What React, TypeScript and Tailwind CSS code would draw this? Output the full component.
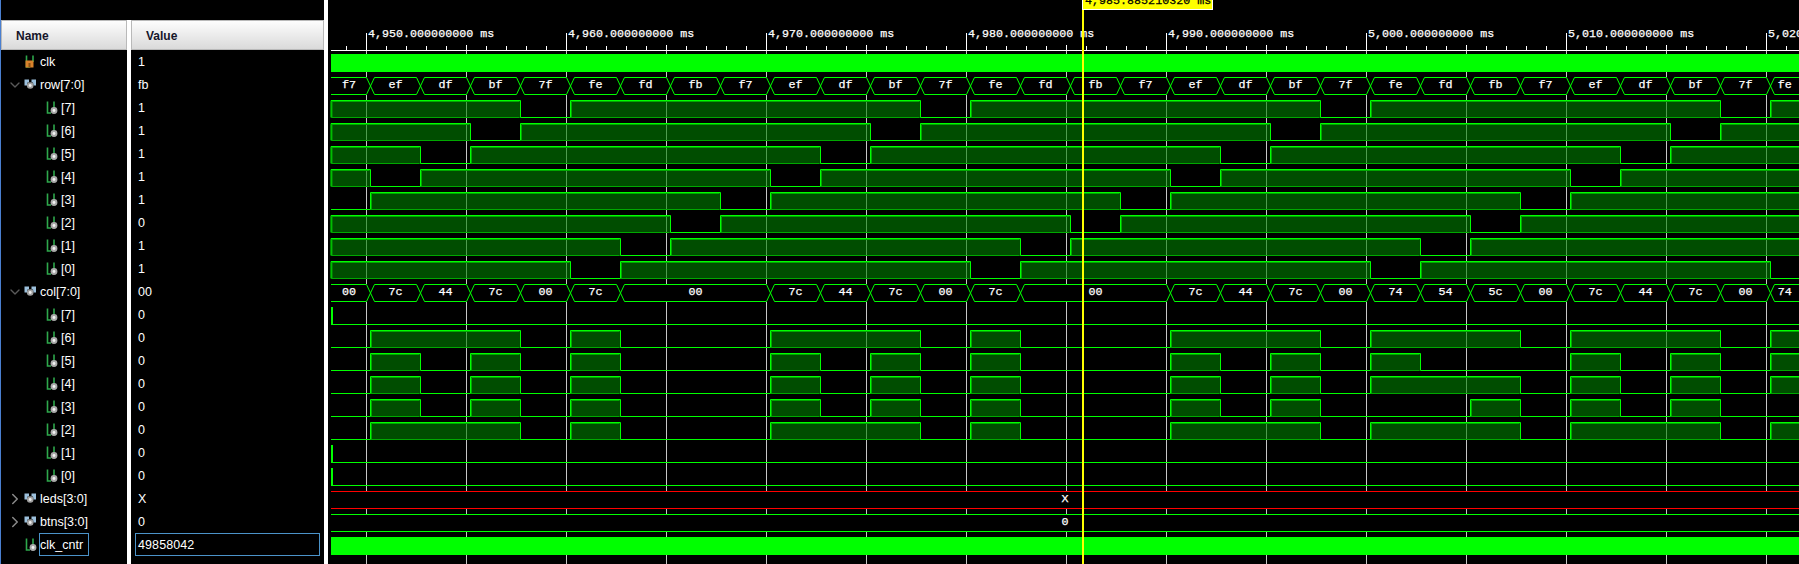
import { ChevronDown, ChevronRight } from "lucide-react";

const GREEN = "#00ff00";

// one entry per 50px slice of the bus, first one is the part before x=370
const rowVals: string[] = [];
const rowCycle = ["f7", "ef", "df", "bf", "7f", "fe", "fd", "fb"];
for (let k = 0; k < 30; k++) rowVals.push(rowCycle[k % 8]);

const colVals = [
  "00", "7c", "44", "7c", "00", "7c", "00", "00", "00", "7c",
  "44", "7c", "00", "7c", "00", "00", "00", "7c", "44", "7c",
  "00", "74", "54", "5c", "00", "7c", "44", "7c", "00", "74",
];

const rowBits = [7, 6, 5, 4, 3, 2, 1, 0];

type Sig = {
  name: string;
  value: string;
  kind: "clk" | "bus" | "bit" | "top";
  open?: boolean;
  closed?: boolean;
  selected?: boolean;
};

const signals: Sig[] = [
  { name: "clk", value: "1", kind: "clk" },
  { name: "row[7:0]", value: "fb", kind: "bus", open: true },
  ...rowBits.map((b) => ({
    name: `[${b}]`,
    value: b === 2 ? "0" : "1",
    kind: "bit" as const,
  })),
  { name: "col[7:0]", value: "00", kind: "bus", open: true },
  ...rowBits.map((b) => ({ name: `[${b}]`, value: "0", kind: "bit" as const })),
  { name: "leds[3:0]", value: "X", kind: "bus", closed: true },
  { name: "btns[3:0]", value: "0", kind: "bus", closed: true },
  { name: "clk_cntr", value: "49858042", kind: "top", selected: true },
];

const edge = (k: number) => (k === 0 ? 331 : 370.5 + 50 * (k - 1));
const topOf = (i: number) => 54 + 23 * i;

const monoText = "font-['Liberation_Mono',monospace] text-[11.7px] stroke-[0.25px]";

function BitIcon({ orange }: { orange?: boolean }) {
  return (
    <svg width="14" height="14" viewBox="0 0 14 14" className="shrink-0">
      <path d="M2.5 0.5V12H6" stroke="#2ea84c" strokeWidth="1.6" fill="none" />
      <path d="M9 0.5V7" stroke="#2ea84c" strokeWidth="1.6" fill="none" />
      {orange ? (
        <>
          <rect x="1.5" y="5.5" width="8" height="7" fill="#d9822b" />
          <rect x="4.5" y="8" width="2" height="4.5" fill="#8a5414" />
        </>
      ) : (
        <>
          <circle cx="9" cy="9.5" r="3.4" fill="#a9a9a9" />
          <circle cx="9" cy="9.5" r="1.4" fill="#f2f2f2" />
        </>
      )}
    </svg>
  );
}

function BusIcon() {
  return (
    <svg width="14" height="14" viewBox="0 0 14 14" className="shrink-0">
      <path d="M0.5 1.5H5V4.5H3.5L3 7.5H0.5Z" fill="#9cc0dc" />
      <path d="M7.5 1.5H12V7.5H9.5L9 4.5H7.5Z" fill="#9cc0dc" />
      <circle cx="6.2" cy="7.5" r="3.3" fill="#a0a0a0" />
      <circle cx="6.2" cy="7.5" r="1.4" fill="#efefef" />
    </svg>
  );
}

function NameCell({ sig }: { sig: Sig }) {
  if (sig.kind === "bit") {
    return (
      <div className="h-[23px] flex items-center pl-[44px]">
        <BitIcon />
        <span className="ml-[2px] pt-[2px]">{sig.name}</span>
      </div>
    );
  }
  return (
    <div className="h-[23px] flex items-center pl-[8px]">
      <span className="w-[15px] shrink-0 flex items-center">
        {sig.open && <ChevronDown size={16} color="#5a5a5a" className="-ml-[2px] shrink-0" />}
        {sig.closed && <ChevronRight size={18} color="#8a8a8a" className="-ml-[3px] shrink-0" />}
      </span>
      {sig.kind === "bus" ? <BusIcon /> : <BitIcon orange={sig.kind === "clk"} />}
      {sig.selected ? (
        <span className="ml-[1px] w-[50px] h-[23px] border border-[#4b93c9] flex items-center pt-[2px]">
          {sig.name}
        </span>
      ) : (
        <span className="ml-[2px] pt-[2px]">{sig.name}</span>
      )}
    </div>
  );
}

function ValueCell({ sig }: { sig: Sig }) {
  if (sig.selected) {
    return (
      <div className="h-[23px] pl-[4px] pr-[4px]">
        <div className="h-full border border-[#4b93c9] flex items-center pl-[2px] pt-[2px] tracking-[0.1px]">{sig.value}</div>
      </div>
    );
  }
  return <div className="h-[23px] flex items-center pl-[7px] pt-[2px]">{sig.value}</div>;
}

function Header({ label, pad }: { label: string; pad: string }) {
  return (
    <div
      className={`h-[30px] flex items-center pt-[2px] ${pad} bg-gradient-to-b from-[#fdfdfd] to-[#dadada] border border-[#b9b9b9] text-[12px] font-bold text-[#15152a]`}
    >
      {label}
    </div>
  );
}

function BitWave({ i, vals, bit, stub }: { i: number; vals: string[]; bit: number; stub?: boolean }) {
  const y0 = topOf(i);
  const hi = (k: number) => (parseInt(vals[k], 16) >> bit) & 1;
  const parts = [];
  let k = 0;
  while (k < vals.length) {
    let e = k;
    while (e + 1 < vals.length && hi(e + 1) === hi(k)) e++;
    const a = edge(k);
    const b = Math.min(edge(e + 1), 1800);
    if (hi(k)) {
      parts.push(
        <g key={k}>
          <rect x={a} y={y0} width={b - a} height={18} fill="#008000" opacity={0.6} />
          <path d={`M${a + 1} ${y0 + 17.5}H${b - 1}M${a + 1} ${y0 + 1.5}H${b - 1}M${a + 1} ${y0 + 1.5}V${y0 + 18}`} stroke="#00a800" fill="none" />
          <path d={`M${a} ${y0 + 17.5}V${y0 + 0.5}H${b}V${y0 + 17.5}`} stroke={GREEN} fill="none" />
        </g>
      );
    } else {
      parts.push(<path key={k} d={`M${a} ${y0 + 17.5}H${b}`} stroke={GREEN} fill="none" />);
    }
    k = e + 1;
  }
  return (
    <g>
      {parts}
      {stub && <rect x={331} y={y0} width={2} height={18} fill={GREEN} />}
    </g>
  );
}

function BusWave({ i, vals }: { i: number; vals: string[] }) {
  const y0 = topOf(i);
  const t = y0 + 0.5;
  const b = y0 + 17.5;
  const parts = [];
  let k = 0;
  while (k < vals.length) {
    let e = k;
    while (e + 1 < vals.length && vals[e + 1] === vals[k]) e++;
    const a = edge(k);
    const z = Math.min(edge(e + 1), 1804);
    const left = k === 0 ? a : a + 4;
    const right = z - 4;
    const cx = k === 0 ? 349 : (a + Math.min(z, 1799)) / 2;
    parts.push(
      <g key={k}>
        <path d={`M${left} ${t}H${right}M${left} ${b}H${right}`} stroke={GREEN} fill="none" />
        <path d={`M${z - 4} ${t}L${z + 4} ${b}M${z - 4} ${b}L${z + 4} ${t}`} stroke={GREEN} fill="none" />
        <text x={cx} y={y0 + 10.5} textAnchor="middle" className={`${monoText} fill-white stroke-white`}>
          {vals[k]}
        </text>
      </g>
    );
    k = e + 1;
  }
  return (
    <g>
      <rect x={331} y={y0} width={1470} height={18} fill="#000" />
      {parts}
    </g>
  );
}

function FlatBus({ i, color, label }: { i: number; color: string; label: string }) {
  const y0 = topOf(i);
  return (
    <g>
      <rect x={331} y={y0} width={1470} height={18} fill="#000" />
      <path d={`M331 ${y0 + 0.5}H1799M331 ${y0 + 17.5}H1799`} stroke={color} fill="none" />
      <text x={1065} y={y0 + 10.5} textAnchor="middle" className={`${monoText} fill-white stroke-white`}>
        {label}
      </text>
    </g>
  );
}

function Waves() {
  const grid = [366, 466, 566, 666, 766, 866, 966, 1066, 1166, 1266, 1366, 1466, 1566, 1666, 1766];
  const labels = [
    [366, "4,950.000000000 ms"],
    [566, "4,960.000000000 ms"],
    [766, "4,970.000000000 ms"],
    [966, "4,980.000000000 ms"],
    [1166, "4,990.000000000 ms"],
    [1366, "5,000.000000000 ms"],
    [1566, "5,010.000000000 ms"],
    [1766, "5,020.000000000 ms"],
  ] as const;
  const minor: number[] = [];
  for (let x = 346; x < 1799; x += 20) minor.push(x);

  return (
    <svg width="1471" height="564" viewBox="328 0 1471 564" className="block">
      {grid.map((x) => (
        <rect key={x} x={x} y={50} width={1} height={514} fill="#c6c6c6" />
      ))}

      <rect x={331} y={topOf(0)} width={1468} height={18} fill={GREEN} />
      <rect x={331} y={topOf(21)} width={1468} height={18} fill={GREEN} />

      <BusWave i={1} vals={rowVals} />
      {rowBits.map((b, n) => (
        <BitWave key={b} i={2 + n} vals={rowVals} bit={b} />
      ))}
      <BusWave i={10} vals={colVals} />
      {rowBits.map((b, n) => (
        <BitWave key={b} i={11 + n} vals={colVals} bit={b} stub={b === 7 || b === 1 || b === 0} />
      ))}
      <FlatBus i={19} color="#ff0000" label="X" />
      <FlatBus i={20} color={GREEN} label="0" />

      {/* ruler */}
      <rect x={331} y={50} width={1468} height={1} fill="#fff" />
      {minor.map((x) => (
        <rect key={x} x={x} y={46} width={1} height={4} fill="#fff" />
      ))}
      {grid.map((x) => (
        <rect key={x} x={x} y={45} width={1} height={5} fill="#fff" />
      ))}
      {labels.map(([x, t]) => (
        <g key={x}>
          <rect x={x} y={33} width={1} height={17} fill="#fff" />
          <text x={x + 2} y={37} className={`${monoText} fill-white stroke-white`}>
            {t}
          </text>
        </g>
      ))}

      {/* cursor */}
      <rect x={1082} y={0} width={2} height={564} fill="#ffff00" />
      <rect x={1082.5} y={-2} width={130} height={11.5} fill="#ffff00" stroke="#fff" />
      <text x={1085} y={4} className={`${monoText} fill-black stroke-black`}>
        4,985.885210320 ms
      </text>
    </svg>
  );
}

export default function App() {
  return (
    <div className="w-[1799px] h-[564px] flex bg-black overflow-hidden text-white text-[12.5px] font-['Liberation_Sans',sans-serif]">
      <div className="w-px bg-[#4a7fd0]" />
      <div className="w-[126px] pt-[20px]">
        <Header label="Name" pad="pl-[14px]" />
        {signals.map((s, i) => (
          <NameCell key={i} sig={s} />
        ))}
      </div>
      <div className="w-[4px] mt-[20px] bg-white" />
      <div className="w-[193px] pt-[20px]">
        <Header label="Value" pad="pl-[14px]" />
        {signals.map((s, i) => (
          <ValueCell key={i} sig={s} />
        ))}
      </div>
      <div className="w-[4px] bg-white" />
      <Waves />
    </div>
  );
}
